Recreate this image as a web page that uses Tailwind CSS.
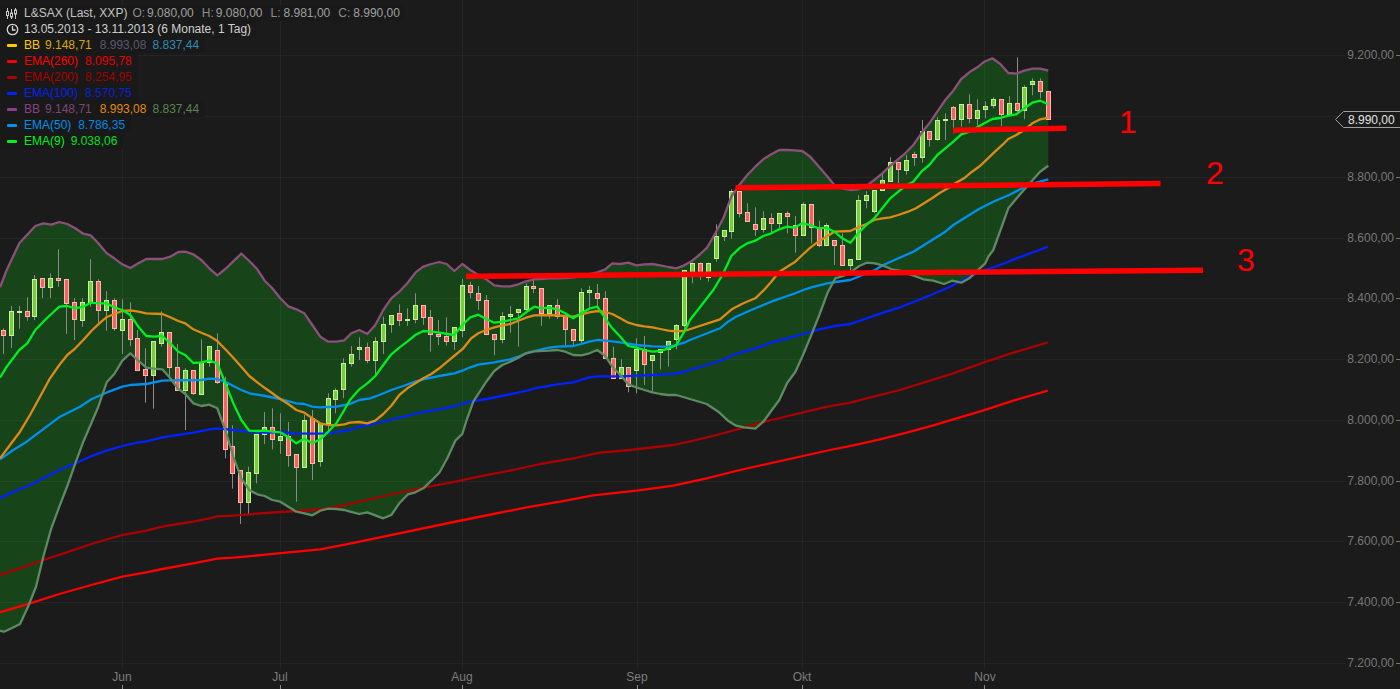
<!DOCTYPE html>
<html lang="de">
<head>
<meta charset="utf-8">
<title>L&amp;SAX Chart</title>
<script src="https://cdn.jsdelivr.net/npm/@tailwindcss/browser@4"></script>
</head>
<body class="bg-[#1b1b1b]">
<div class="relative w-[1400px] h-[689px] overflow-hidden bg-[#1b1b1b] font-['Liberation_Sans',sans-serif]">
  <svg class="absolute inset-0" width="1400" height="689" viewBox="0 0 1400 689">
    <polygon id="bandFill" fill="#18441a" stroke="none"></polygon>
    <path d="M0 55.5H1345M0 116.5H1345M0 177.5H1345M0 238.5H1345M0 298.5H1345M0 359.5H1345M0 420.5H1345M0 481.5H1345M0 541.5H1345M0 602.5H1345M0 663.5H1345M122.5 0V669M280.5 0V669M462.5 0V669M637.5 0V669M802.5 0V669M984.5 0V669" stroke="#ffffff" stroke-opacity="0.045" fill="none"></path>
    <g id="candles"></g>
    <g id="lines" fill="none" stroke-width="2.3" stroke-linejoin="round" stroke-linecap="butt"></g>

    <g stroke="#ff0000" stroke-width="5.5" fill="none">
      <path d="M953 130.2L1066.5 128.3"></path>
      <path d="M735.5 187.8L1160.5 183.6"></path>
      <path d="M466 276.3L1203 270.2"></path>
    </g>
    <g fill="#ff0000" font-size="32">
      <text x="1119" y="133">1</text>
      <text x="1206" y="184">2</text>
      <text x="1237" y="271">3</text>
    </g>

    <g fill="#777777" font-size="12" text-anchor="end">
      <text x="1394" y="59">9.200,00</text>
      <text x="1394" y="181">8.800,00</text>
      <text x="1394" y="242">8.600,00</text>
      <text x="1394" y="302">8.400,00</text>
      <text x="1394" y="363">8.200,00</text>
      <text x="1394" y="424">8.000,00</text>
      <text x="1394" y="485">7.800,00</text>
      <text x="1394" y="545">7.600,00</text>
      <text x="1394" y="606">7.400,00</text>
      <text x="1394" y="667">7.200,00</text>
    </g>
    <path d="M1396 55.5H1400M1396 177.5H1400M1396 238.5H1400M1396 298.5H1400M1396 359.5H1400M1396 420.5H1400M1396 481.5H1400M1396 541.5H1400M1396 602.5H1400M1396 663.5H1400" stroke="#777777" fill="none"></path>

    <polygon points="1335.5,119.5 1343.5,111.5 1401,111.5 1401,127.5 1343.5,127.5" fill="#1b1b1b" stroke="#a0a0a0"></polygon>
    <text x="1348" y="124" fill="#e4e4e4" font-size="12">8.990,00</text>

    <g fill="#7c7c7c" font-size="12" text-anchor="middle">
      <text x="122" y="681">Jun</text>
      <text x="280" y="681">Jul</text>
      <text x="462" y="681">Aug</text>
      <text x="637" y="681">Sep</text>
      <text x="802" y="681">Okt</text>
      <text x="985" y="681">Nov</text>
    </g>
    <path d="M122.5 685V689M280.5 685V689M462.5 685V689M637.5 685V689M802.5 685V689M984.5 685V689" stroke="#8a8a8a" fill="none"></path>
  </svg>

  <div class="absolute left-0 top-[5px] flex flex-col items-start text-[12px] leading-4 whitespace-pre">
    <div class="flex h-4 items-center bg-[#191919] pr-[5px]">
      <span class="flex w-6 flex-none pl-[6px]">
        <svg width="12" height="11" viewBox="0 0 12 11" fill="none" stroke="#c8c8c8" stroke-width="1">
          <path d="M1.5 0V3.5M1.5 7.5V11M5.5 1V5M5.5 9V11M9.5 0V2M9.5 6V11"></path>
          <rect x="0.5" y="3.5" width="2" height="4"></rect>
          <rect x="4.5" y="5" width="2" height="4"></rect>
          <rect x="8.5" y="2" width="2" height="4"></rect>
        </svg>
      </span>
      <span class="text-[#c4c4c4]">L&amp;SAX (Last, XXP)</span>
      <span class="ml-[5px] text-[#8c8c8c]">O:</span>
      <span class="ml-[2px] text-[#a0a0a0]">9.080,00</span>
      <span class="ml-[8px] text-[#8c8c8c]">H:</span>
      <span class="ml-[2px] text-[#a0a0a0]">9.080,00</span>
      <span class="ml-[8px] text-[#8c8c8c]">L:</span>
      <span class="ml-[3px] text-[#a0a0a0]">8.981,00</span>
      <span class="ml-[8px] text-[#8c8c8c]">C:</span>
      <span class="ml-[3px] text-[#a0a0a0]">8.990,00</span>
    </div>
    <div class="flex h-4 items-center bg-[#191919] pr-[5px]">
      <span class="flex w-6 flex-none pl-[6px]">
        <svg width="13" height="13" viewBox="0 0 13 13" fill="none" stroke="#d8d8d8" stroke-width="1.3">
          <circle cx="6.5" cy="6.5" r="5.2"></circle>
          <path d="M6.5 3V7H9.5"></path>
        </svg>
      </span>
      <span class="text-[#d0d0d0]">13.05.2013 - 13.11.2013 (6 Monate, 1 Tag)</span>
    </div>
    <div class="flex h-4 items-center bg-[#191919] pr-[6px]">
      <span class="flex w-6 flex-none pl-[7px]"><span class="h-[3px] w-[10px] rounded-[1px] bg-[#ffc800]"></span></span>
      <span class="text-[#ffc800]">BB</span>
      <span class="ml-[5px] text-[#d8a808]">9.148,71</span>
      <span class="ml-[8px] text-[#5c5672]">8.993,08</span>
      <span class="ml-[6px] text-[#2e8cba]">8.837,44</span>
    </div>
    <div class="flex h-4 items-center bg-[#191919] pr-[6px]">
      <span class="flex w-6 flex-none pl-[7px]"><span class="h-[3px] w-[10px] rounded-[1px] bg-[#ff0000]"></span></span>
      <span class="text-[#ff0000]">EMA(260)</span>
      <span class="ml-[7px] text-[#e60000]">8.095,78</span>
    </div>
    <div class="flex h-4 items-center bg-[#191919] pr-[6px]">
      <span class="flex w-6 flex-none pl-[7px]"><span class="h-[3px] w-[10px] rounded-[1px] bg-[#aa0000]"></span></span>
      <span class="text-[#aa0000]">EMA(200)</span>
      <span class="ml-[7px] text-[#a00000]">8.254,95</span>
    </div>
    <div class="flex h-4 items-center bg-[#191919] pr-[6px]">
      <span class="flex w-6 flex-none pl-[7px]"><span class="h-[3px] w-[10px] rounded-[1px] bg-[#0022ff]"></span></span>
      <span class="text-[#0a22f0]">EMA(100)</span>
      <span class="ml-[7px] text-[#0a22d8]">8.570,75</span>
    </div>
    <div class="flex h-4 items-center bg-[#191919] pr-[6px]">
      <span class="flex w-6 flex-none pl-[7px]"><span class="h-[3px] w-[10px] rounded-[1px] bg-[#8c3f88]"></span></span>
      <span class="text-[#8c3f88]">BB</span>
      <span class="ml-[5px] text-[#7c4878]">9.148,71</span>
      <span class="ml-[8px] text-[#e08a10]">8.993,08</span>
      <span class="ml-[6px] text-[#5c8455]">8.837,44</span>
    </div>
    <div class="flex h-4 items-center bg-[#191919] pr-[6px]">
      <span class="flex w-6 flex-none pl-[7px]"><span class="h-[3px] w-[10px] rounded-[1px] bg-[#0090f0]"></span></span>
      <span class="text-[#0090f0]">EMA(50)</span>
      <span class="ml-[7px] text-[#0088e4]">8.786,35</span>
    </div>
    <div class="flex h-4 items-center bg-[#191919] pr-[6px]">
      <span class="flex w-6 flex-none pl-[7px]"><span class="h-[3px] w-[10px] rounded-[1px] bg-[#00f020]"></span></span>
      <span class="text-[#00f020]">EMA(9)</span>
      <span class="ml-[6px] text-[#00e020]">9.038,06</span>
    </div>
  </div>
</div>

<script>
// [zoomX origin, zoomY origin, flat list of coordinates at 3x]
function P(ox, oy, a) { var r = []; for (var i = 0; i < a.length; i += 2) r.push([ox + a[i] / 3, oy + a[i + 1] / 3]); return r; }
var Z3 = [0, 200], Z4 = [340, 250], Z5 = [680, 130], Z2 = [900, 40], Z7 = [0, 400], Z8 = [340, 390], Z9 = [720, 250];
function seg(z, a) { return P(z[0], z[1], a); }

var upper = [].concat(
  seg(Z3, [0,262,20,210,58,130,106,78,130,70,154,74,178,66,202,72,226,85,250,101,272,106,295,130,320,160,343,175,367,193,391,204,415,190,439,177,487,177,511,170,535,156,556,155,580,163,604,180,628,205,652,226,676,207,700,184,724,161,748,183,772,208,794,242,817,265,841,295,865,319,889,328,913,340,937,375,961,410,985,425,1009,425,1033,421]),
  seg(Z4, [34,250,58,240,82,252,106,225,130,180,154,145,178,125,202,100,226,68,250,50,274,42,298,36,320,42,343,63,367,42,391,60,415,75,439,88,463,106,487,109,511,109,535,103,558,94,583,88,604,87,628,85,652,85,676,84,700,82,724,78,748,72,772,67,796,58,817,40,841,42,865,38,889,46,913,43,937,42,961,46,985,51,1009,55,1033,46]),
  seg(Z5, [37,392,61,372,82,352,106,310,130,265,154,200,178,165,202,135,226,110,250,88,274,73,298,60,322,60,343,61,367,63,391,80,415,108,439,136,463,165,487,175,511,180,535,178,559,168,583,150,607,130,628,110,652,90,676,70]),
  seg(Z2, [40,315,64,280,88,250,112,215,136,180,160,152,184,117,208,97,232,82,253,65,277,55,301,72,325,99,349,101,373,92,397,86,421,86,445,92])
);
var lower = [].concat(
  seg(Z7, [0,692,12,695,36,684,60,672,84,620,108,560,130,470,154,385,178,320,202,258,226,190,250,125,274,70,295,20]),
  seg(Z3, [320,547,343,522,367,482,391,460,415,482,439,503,463,506,487,508,511,535,533,565,556,582,580,610,604,618,628,614,652,625,676,690,700,770,724,835,748,870,772,883,794,888,817,900,841,905,865,920,889,935,913,940,937,946,961,932,985,926,1009,927,1033,930]),
  seg(Z8, [30,365,58,372,82,367,106,376,130,385,154,375,178,340,204,313,226,307,250,295,274,272,298,248,322,205,346,152,367,132,380,90,400,35]),
  seg(Z4, [439,395,463,363,487,345,511,335,535,323,558,310,583,304,628,302,652,300,676,305,700,315,724,316,748,310,772,300,796,318,817,350,841,375,865,403,889,412,913,420,937,427,961,432,985,435,1009,435]),
  seg(Z8, [1060,30,1100,42,1135,65]),
  seg(Z9, [24,512,48,527,72,532,106,536,130,515,154,482,178,450,202,398,226,366,250,313,274,255,298,195,322,130,346,85,370,78,394,65,418,48,440,38,465,40,490,47,515,58,540,62,565,72,590,80,610,88,640,92,672,102,696,92,724,98,748,85,772,62,796,40]),
  seg(Z2, [265,650,280,630,325,505,350,475,380,440,420,395,445,377])
);
var orange = [].concat(
  seg(Z3, [0,775,30,735,60,695,90,645,120,590,150,535,178,495,202,465,226,445,250,420,274,393,298,370,319,352,343,342,367,333,391,331,415,335,439,340,487,342,511,352,535,363,556,370,580,388,604,398,628,408,652,423,676,448,700,473,724,500,748,528,772,547,796,565,817,580,841,597,865,612,889,630,913,638,937,655,961,670,985,675,1009,676,1033,673]),
  seg(Z8, [30,98,58,96,82,100,106,92,130,72,154,47]),
  seg(Z4, [178,435,202,415,226,400,250,385,274,372,298,355,322,335,346,315,370,295,394,265,415,250,439,240,463,232,487,226,511,222,535,212,558,203,583,196,628,195,652,196,676,198,700,200,724,193,748,187,772,183,796,186,817,192,841,205,865,218,889,225,913,229,937,232,961,237,985,242,1009,244,1033,243]),
  seg(Z9, [0,208,35,178,70,160,106,145,130,122]),
  seg(Z5, [274,455,298,425,346,395,367,375,391,353,415,335,439,320,463,305,511,303,535,292,559,282,583,270,607,265,631,262,655,255]),
  seg(Z2, [24,515,48,505,72,490,96,475,120,458,144,445,168,428,192,415,216,395,240,378,264,355,288,332,312,310,325,297,349,285,373,270,397,250,421,238,445,233])
);
var ema9 = [].concat(
  seg(Z3, [0,533,20,500,58,450,82,430,106,390,130,365,154,342,178,320,202,318,226,325,250,320,272,308,295,310,319,310,343,322,367,330,391,345,415,380,439,408,463,410,487,408,511,430,535,455,556,465,580,489,604,487,628,482,652,490,676,550,700,610,724,660,748,692,772,693,796,692,817,695,841,697,865,712,889,730,913,716,937,730,961,718,985,695,1009,670,1033,630]),
  seg(Z4, [30,450,58,418,82,400,106,378,130,345,154,313,178,293,202,275,226,255,250,243,274,245,298,248,322,252,343,255,367,225,391,202,415,194,439,207,463,218,487,215,511,210,535,205,558,187,583,170,604,175,628,173,652,178,676,190,700,205,724,190,748,176,772,170,796,205,817,235,841,260,865,288,889,293,913,300,937,305,961,303,985,296,1009,285,1033,245,1050,210]),
  seg(Z5, [100,480,130,430,154,378,178,355,202,340,226,332,250,318,274,310,298,298,322,290,343,293,367,280,391,285,415,295,439,293,463,305,487,325,511,338,535,310,559,285,583,265,607,235,631,205,655,185]),
  seg(Z2, [20,435,40,425,64,395,88,375,112,345,136,325,160,305,184,283,208,275,232,262,253,250,277,237,301,234,325,227,349,223,373,205,397,188,421,182,445,193])
);
var ema50 = [].concat(
  seg(Z3, [0,778,40,750,80,725,120,695,180,650,240,620,274,598,319,578,367,560,391,555,439,552,487,542,511,541,604,540,628,536,652,537,676,545,700,558,724,570,748,580,772,584,796,588,841,597,889,610,913,612,937,620,961,622,985,621,1009,620,1050,612]),
  seg(Z4, [58,450,90,445,118,435,154,420,190,408,226,395,250,388,298,378,343,370,367,362,391,352,415,344,463,337,511,328,535,320,558,310,583,303,628,293,652,290,700,288,724,282,748,275,772,270,796,272,841,277,889,285,937,289,985,290,1009,285,1033,278,1050,270]),
  seg(Z9, [0,235,24,215,48,200,72,190,106,175,154,155,202,138,226,130,250,120,274,112,322,100,346,96,391,90,415,80,440,70,465,60,490,45]),
  seg(Z2, [40,635,64,620,88,605,112,590,136,575,160,555,184,540,208,525,232,510,256,497,280,485,304,475,328,465,352,452,376,440,400,430,445,418])
);
var ema100 = [].concat(
  seg(Z7, [0,295,40,275,90,255,130,235,178,210,226,190,270,170,319,152,367,138,415,127,439,124,487,112,533,105,580,98,628,88,652,85,700,90,748,95,796,98,841,96,889,100,937,101,985,100,1050,90]),
  seg(Z8, [50,112,100,102,150,90,200,78,250,66,298,58,346,48,390,35,440,27,500,15,570,0]),
  seg(Z4, [583,415,652,403,700,397,748,382,772,379,841,379,913,376,985,373,1033,366,1050,360]),
  seg(Z9, [0,333,48,312,96,298,154,278,202,265,250,252,298,238,346,228,391,222,440,205,490,188,540,172,590,152,640,132,690,110,740,85,790,62,840,45,890,25,958,0]),
  seg(Z2, [443,620])
);
var ema200 = [].concat(
  seg(Z7, [0,525,60,505,130,480,200,457,274,432,367,405,439,392,487,380,533,372,580,365,628,355,652,349,700,347,748,343,796,339,841,336,889,333,937,330,985,325,1050,312]),
  seg(Z8, [80,330,160,312,240,295,346,275,391,265,450,253,520,240,600,222,700,205,780,188,870,180,1000,165,1060,152,1130,135,1200,116]),
  seg(Z9, [80,530,154,510,250,487,322,470,391,458,460,440,540,420,620,395,700,370,790,338,880,308,983,277])
);
var ema260 = [].concat(
  seg(Z7, [0,637,90,610,178,582,274,555,367,530,439,517,487,507,580,490,652,476,700,473,796,464,889,455,961,448,1050,431]),
  seg(Z8, [370,390,460,372,560,352,660,335,760,316,890,302,1000,287,1100,265,1200,240]),
  seg(Z9, [330,600,400,586,480,568,560,548,640,526,720,502,800,478,880,452,983,422])
);

function str(p) { return p.map(function (q) { return q[0].toFixed(1) + ',' + q[1].toFixed(1); }).join(' '); }
document.getElementById('bandFill').setAttribute('points', str(upper.concat(lower.slice().reverse())));

var lineDefs = [[ema260,'#ff0000'],[ema200,'#aa0000'],[ema100,'#0022ff'],[ema50,'#0090ee'],[orange,'#dc8a18'],[upper,'#8c4f7c'],[lower,'#5f8a63'],[ema9,'#00ee22']];
var h = '';
lineDefs.forEach(function (d) { h += '<polyline points="' + str(d[0]) + '" stroke="' + d[1] + '"></polyline>'; });
document.getElementById('lines').innerHTML = h;

// each candle: isGreen, bodyTop, bodyBottom, wickTop, wickBottom (3x zoom y)
var groups = [
 [200, [[0,391,404,385,462],[1,334,404,318,444],[1,334,336,318,386],[0,334,347,292,362],[1,238,347,225,360],[0,235,260,235,294],[1,235,260,220,294],[0,235,240,148,260],[0,238,308,238,402],[0,307,356,295,420],[1,307,359,295,380],[1,244,307,178,320],[0,244,329,238,368],[1,301,329,274,392],[0,301,383,295,392],[1,358,389,298,462],[0,358,416,307,438],[0,415,509,390,510],[0,508,524,445,608],[1,424,524,424,626],[1,397,430,334,440],[0,397,502,397,530],[0,502,569,432,570],[1,511,569,505,690],[0,511,578,511,585],[1,487,581,418,581],[1,439,487,439,500],[0,451,547,400,552],[0,547,748,530,775],[0,739,818,676,866],[0,811,905,811,972],[1,817,905,800,942],[1,703,818,703,850],[1,682,703,636,732],[0,682,716,625,748],[1,709,719,640,762],[0,709,764,666,800],[0,763,800,763,905],[1,661,800,645,800],[0,655,788,630,840],[1,670,782,670,800],[1,595,670,580,700],[1,571,596,565,640]]],
 [250, [[1,340,416,325,445],[1,313,340,288,350],[1,292,296,262,330],[0,292,331,278,340],[1,274,331,262,375],[1,223,274,200,312],[1,196,223,196,248],[0,190,211,163,228],[1,208,211,175,228],[1,166,208,130,220],[0,166,202,166,225],[0,202,253,180,305],[0,253,259,210,285],[0,259,274,202,287],[1,232,274,232,300],[1,106,241,87,262],[0,106,127,95,145],[0,130,151,108,180],[0,151,253,135,255],[0,253,266,253,316],[1,199,266,186,280],[1,193,199,168,248],[1,178,187,178,290],[1,109,178,100,190],[0,109,115,75,130],[0,115,190,115,228],[1,166,190,166,206],[0,166,199,148,207],[0,199,238,199,285],[0,238,271,238,290],[1,127,271,115,285],[1,121,127,108,175],[0,130,145,102,175],[0,145,325,124,325],[0,325,385,290,385],[1,352,385,328,385],[0,352,409,352,427],[1,298,361,265,430],[0,298,343,258,405],[1,316,331,316,425],[1,298,307,298,358],[1,274,298,274,350],[1,226,268,222,298]]],
 [130, [[1,420,586,420,600],[1,398,432,398,460],[0,398,430,398,450],[1,398,440,398,455],[1,317,383,283,395],[1,301,317,301,333],[1,184,302,178,326],[0,184,248,184,262],[0,247,272,220,272],[0,283,296,232,318],[1,265,296,244,308],[0,265,278,250,306],[1,250,278,250,296],[0,250,257,244,310],[0,286,314,258,368],[1,223,314,217,314],[0,223,290,223,340],[0,290,346,272,352],[1,286,346,280,346],[0,331,346,331,405],[0,346,404,310,404],[1,388,404,388,430],[1,211,388,196,390],[1,196,211,184,235],[1,181,242,181,250],[1,151,181,125,181],[1,97,152,82,152],[0,97,118,97,160]]],
 [40, [[1,361,389,345,404],[0,343,352,335,378],[1,274,352,240,368],[0,274,296,274,320],[1,241,296,232,302],[1,238,241,220,300],[0,202,238,198,280],[1,193,238,193,260],[0,193,235,163,250],[1,211,235,178,265],[1,199,208,184,235],[1,178,196,172,205],[0,178,223,178,258],[1,190,223,168,225],[0,190,211,52,218],[1,142,211,136,238],[1,124,133,115,166],[0,124,154,115,175],[0,154,238,154,238]]]
];
var c = '', n = 0;
groups.forEach(function (g) {
  var oy = g[0];
  g[1].forEach(function (k) {
    var x = Math.floor(3.3 + 7.92 * n) + 0.5;
    var t = Math.round(oy + k[1] / 3) + 0.5, b = Math.max(Math.round(oy + k[2] / 3) + 0.5, t + 1);
    var wt = oy + k[3] / 3, wb = oy + k[4] / 3;
    c += '<path d="M' + x + ' ' + wt.toFixed(1) + 'V' + wb.toFixed(1) + '" stroke="#8a8a8a"></path>';
    c += '<rect x="' + (x - 2) + '" y="' + t + '" width="4" height="' + (b - t) + '" fill="' + (k[0] ? '#78cc40' : '#f26464') + '" stroke="' + (k[0] ? '#c6f09a' : '#ffb8b0') + '"></rect>';
    n++;
  });
});
document.getElementById('candles').innerHTML = c;
</script>
</body>
</html>
